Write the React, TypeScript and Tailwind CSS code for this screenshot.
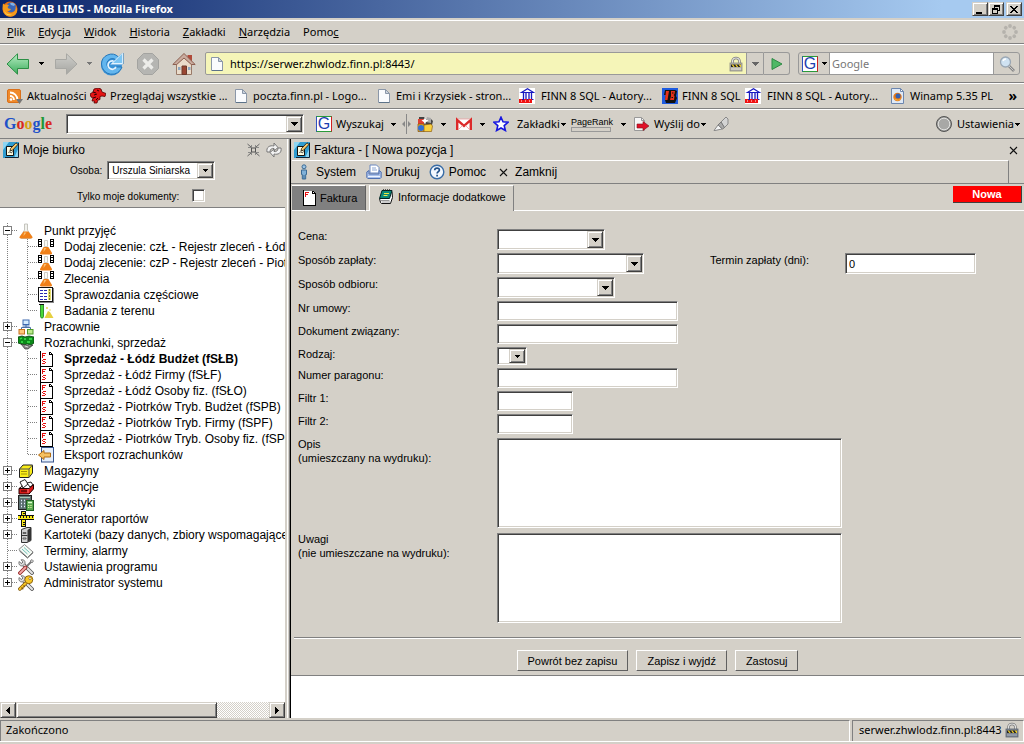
import React from "react";

const UI = "font-['Noto_Sans','Open_Sans',sans-serif] text-[11px] leading-[14px]";
const ARIAL = "font-['Liberation_Sans',Arial,sans-serif]";
const BAR = "flex items-center border-t border-t-white border-b border-b-[#808080]";
const SUNKEN =
  "border border-t-[#808080] border-l-[#808080] border-r-white border-b-white bg-white shadow-[inset_1px_1px_0_#404040,inset_-1px_-1px_0_#d4d0c8]";
const RAISED =
  "bg-[#d4d0c8] border border-t-[#d4d0c8] border-l-[#d4d0c8] border-r-[#404040] border-b-[#404040] shadow-[inset_1px_1px_0_#fff,inset_-1px_-1px_0_#808080]";

type IconProps = { children: React.ReactNode; size?: number; box?: string };

function Icon({ children, size = 16, box = "0 0 16 16" }: IconProps) {
  return (
    <svg width={size} height={size} viewBox={box} className="block flex-none" aria-hidden="true">
      {children}
    </svg>
  );
}

function Caret({ gray = false }: { gray?: boolean }) {
  return (
    <svg width="5" height="3" viewBox="0 0 5 3" className="block flex-none" shapeRendering="crispEdges" aria-hidden="true">
      <path d="M0 0h5v1H0zM1 1h3v1H1zM2 2h1v1H2z" fill={gray ? "#777" : "#000"} />
    </svg>
  );
}

function BigCaret({ gray = false }: { gray?: boolean }) {
  return (
    <svg width="7" height="4" viewBox="0 0 7 4" className="block" shapeRendering="crispEdges" aria-hidden="true">
      <path d="M0 0h7v1H0zM1 1h5v1H1zM2 2h3v1H2zM3 3h1v1H3z" fill={gray ? "#666" : "#000"} />
    </svg>
  );
}

/* ---------- browser icons ---------- */

const Firefox = () => (
  <Icon>
    <circle cx="8" cy="8" r="7.5" fill="#e66a10" />
    <circle cx="9" cy="6.5" r="5" fill="#3a66b8" />
    <path d="M8 2.500c2-1.500 4-.5 5 1l-1 1.500-3-1z" fill="#7fb2ea" />
    <path d="M1 2.500 3 4c1.500-.8 3-.6 4 .4L5.500 6l1 1.500L9 8c-1 2-3 2.400-4 1.700C6.500 12.500 11 12.600 13 9.500c.7-1.300.8-2.500.5-4 1.600 1.500 2 4 1.300 6C13 16 8 16.500 5 15 1 13 0 8 1 2.500z" fill="#f59a1c" />
    <path d="M2 9c1 3.500 4.500 5 8 4.500-3 2-7.500.5-8-4.500z" fill="#fcd34a" />
  </Icon>
);

const Page = () => (
  <Icon>
    <path d="M2.500 1.500h7l4 4v9h-11z" fill="#fafbfd" stroke="#8b97a8" />
    <path d="M9.500 1.500v4h4z" fill="#cbd3de" stroke="#8b97a8" />
    <path d="M3 14.500h10.500" stroke="#5c7288" />
  </Icon>
);

const Feed = () => (
  <Icon>
    <rect x="0.500" y="1.500" width="13" height="13" rx="1.500" fill="#f08a2c" stroke="#d9701a" />
    <path d="M3 4.500a7.500 7.500 0 0 1 7.500 7.500M3 8a4 4 0 0 1 4 4" fill="none" stroke="#fff" strokeWidth="1.800" />
    <circle cx="4" cy="11.500" r="1.300" fill="#fff" />
    <path d="M9 11h7l-3.500 5z" fill="#777" />
  </Icon>
);

const Beast = () => (
  <Icon>
    <path d="M0 6 3 4l1-3 4-1 3 1 1 3 4 1.500-1 3-3-.5-2 .5 0 3-2 .5-.5 1L7 15l-3 0 .5-2L2 13l1-3-2-1z" fill="#e41414" stroke="#500" strokeWidth=".8" />
    <path d="M3 4l3 1M4 7l3-1M3 10l3-1M6 12l2-2M7 2l2 1" fill="none" stroke="#300" />
  </Icon>
);

const Temple = () => (
  <Icon>
    <rect width="16" height="16" fill="#fff" />
    <path d="M2.500 4.500 8.500 .8l6 3.700z" fill="none" stroke="#1818c0" strokeWidth="1.200" />
    <path d="M4.500 5v6M7 5v6M10 5v6M12.500 5v6" stroke="#1818c0" strokeWidth="1.300" />
    <path d="M3 11.500h11.500" stroke="#1818c0" />
    <path d="M0 11h3v1h2v-1h3v1h1v-1h4v4H0z" fill="#f01010" />
    <path d="M2 13h1M6 13h1M10 13h1" stroke="#fff" />
  </Icon>
);

const BlueB = () => (
  <Icon>
    <rect width="16" height="16" fill="#1e5be0" />
    <path d="M3 2h10l2 1-1 5 1 2-2 5H4l-1-3 1-5H2z" fill="#111" />
    <path d="M4 3h3L5.500 12H3zM9 3h4l-.5 3-1 1 1 1-.5 4H8l1-4z" fill="#e83018" />
    <path d="M10 5h1.500M9.500 9.500H11" stroke="#111" />
  </Icon>
);

const FoxPage = () => (
  <Icon>
    <path d="M1.500 .5h9l3 3v12h-12z" fill="#dfe9f6" stroke="#6d86ae" />
    <path d="M10.500 .5v3h3z" fill="#fff" stroke="#6d86ae" />
    <circle cx="7.500" cy="9" r="4.200" fill="#e87818" />
    <circle cx="8" cy="8" r="2.500" fill="#3560b0" />
    <path d="M4 9c1 3 5 4 7 1-1 3-6 4-7-1z" fill="#fbc640" />
  </Icon>
);

const Padlock = ({ light = false }: { light?: boolean }) => (
  <Icon>
    <path d="M4.500 8V5.500a3.500 3.500 0 0 1 7 0V8" fill="none" stroke="#777" strokeWidth="2.600" />
    <path d="M4.500 8V5.500a3.500 3.500 0 0 1 7 0V8" fill="none" stroke="#e4e4e4" strokeWidth="1.200" />
    <rect x="2" y="7" width="12" height="8" fill={light ? "#b4b2aa" : "#7c8490"} stroke={light ? "#8a8a84" : "#5c6470"} strokeWidth=".8" />
    <path d="M3 8.500h10v2.500H3z" fill="#222" />
    <path d="m3.500 8.500 1.800 2.500h1.500L5 8.500zM7 8.500 8.800 11h1.500L8.500 8.500zM10.500 8.500l1.800 2.500h.7V9l-.5-.5z" fill="#f0cf28" />
    <path d="M3 13h10" stroke={light ? "#e6e4dc" : "#a8b0bc"} />
  </Icon>
);

const Arrow = ({ flip = false }: { flip?: boolean }) => (
  <Icon size={24} box="0 0 24 24">
    <defs>
      <linearGradient id={flip ? "fwd" : "back"} x1="0" y1="0" x2="0" y2="1">
        <stop offset="0" stopColor={flip ? "#cfcfcb" : "#b8eec4"} />
        <stop offset="1" stopColor={flip ? "#a5a5a1" : "#3cac5c"} />
      </linearGradient>
    </defs>
    <path
      d={flip ? "M23 12 12.500 1.800v5.700H1.500v9h11v5.700z" : "M1 12 11.500 1.800v5.700h11v9h-11v5.700z"}
      fill={flip ? "url(#fwd)" : "url(#back)"}
      stroke={flip ? "#a8a8a4" : "#2c8f45"}
    />
  </Icon>
);

const Reload = () => (
  <Icon size={24} box="0 0 24 24">
    <circle cx="11.500" cy="13" r="10.500" fill="#3a93d8" />
    <path d="M1.500 12a10 10 0 0 1 17-7L23 1v11H12l4-4a5.500 5.500 0 1 0 1 7h5A10.500 10.500 0 0 1 1.500 12z" fill="#63b6ee" stroke="#2676b8" />
    <path d="M13.500 9a4.200 4.200 0 1 0 2.500 6M12.500 11.500h9.500v-9z" fill="none" stroke="#e4f4ff" strokeWidth="1.800" />
    <path d="M13 11h9V2z" fill="#7cc5f3" />
  </Icon>
);

const Stop = () => (
  <Icon size={24} box="0 0 24 24">
    <path d="M7.500 1.500h9l6 6v9l-6 6h-9l-6-6v-9z" fill="#b5b5b2" stroke="#a3a3a0" />
    <path d="m7.500 7.500 9 9m0-9-9 9" stroke="#ecece9" strokeWidth="3.200" />
  </Icon>
);

const HomeIcon = () => (
  <Icon size={24} box="0 0 24 24">
    <path d="M15.500 3h4.500v7h-4.500z" fill="#b04a3a" />
    <path d="M4.500 12v10.500h15V12L12 5z" fill="#eadccb" stroke="#9a7a68" />
    <path d="M12 1.500 .8 12.500h3.900L12 6l7.300 6.500h3.900z" fill="#c9ab9e" stroke="#8c5f50" />
    <path d="M10 14h4.500v8.500H10z" fill="#9a4632" stroke="#6c3a2c" />
    <path d="M6 15h2.500v3H6zM16 15h2.500v3H16z" fill="#8da6c0" />
  </Icon>
);

const Throbber = () => (
  <Icon>
    {[0, 45, 90, 135, 180, 225, 270, 315].map((a) => (
      <circle key={a} cx="8" cy="2" r="1.900" fill="#b5b2ac" transform={`rotate(${a} 8 8)`} />
    ))}
  </Icon>
);

function GoogleG() {
  return (
    <span className="flex h-4 w-4 flex-none items-center justify-center border border-t-[#2a9a3a] border-r-[#d02020] border-b-[#2a9a3a] border-l-[#3050c0] bg-white font-['Liberation_Sans',sans-serif] text-[16px] leading-4 text-[#1c3eb0]">
      G
    </span>
  );
}

const Sparkle = () => (
  <Icon>
    <path d="M2 1h5l2 2h5l2 2-1 4H2z" fill="#444" />
    <path d="M1 3h6v6H1z" fill="#e04030" />
    <path d="M10 1l4 1v5l-5-1z" fill="#aaa" />
    <path d="M1 8h6v7.500H1z" fill="#f0b020" stroke="#805010" strokeWidth=".7" />
    <path d="M7 9l7-1 1.500 2-1 5.500H7z" fill="#f8d040" stroke="#906010" strokeWidth=".7" />
    <circle cx="4" cy="12" r="3" fill="#3070d8" />
    <path d="m8 1 1 2.500 2.500 1L9 6 8 8.500 6.800 6 4.500 4.500 7 3.500z" fill="#fff" />
  </Icon>
);

const Gmail = () => (
  <Icon>
    <path d="M0 3h16v11H0z" fill="#fff" />
    <path d="M1.200 14V3.800L8 9.800l6.800-6V14" fill="none" stroke="#dc2a2a" strokeWidth="2.400" />
    <path d="m2.500 13.500 4-4M13.500 13.500l-4-4M2 3h12" stroke="#e8a0a0" strokeWidth=".8" />
  </Icon>
);

const StarIcon = () => (
  <Icon>
    <path d="m8 1.200 2 4.600 5 .5-3.800 3.300 1.200 4.900L8 12l-4.400 2.500 1.200-4.900L1 6.300l5-.5z" fill="#fff" stroke="#1616e0" strokeWidth="1.600" />
  </Icon>
);

const SendIcon = () => (
  <Icon>
    <path d="M1.500 1.500h7l3 3v10h-10z" fill="#f6f6f6" stroke="#999" />
    <path d="M8.500 1.500v3h3" fill="none" stroke="#999" />
    <path d="M4 8h6V5.500l6 4.500-6 4.500V12H4z" fill="#e01028" stroke="#801018" strokeWidth=".6" />
  </Icon>
);

const Marker = () => (
  <Icon>
    <path d="M8 6 13 1l2 2v5l-4 4z" fill="#d4d4d4" stroke="#888" />
    <path d="m8 6 3.500 5.500-2 1.500L5 9z" fill="#aaa" stroke="#777" />
    <path d="M5 9l4 4-7 1.500H1z" fill="#f4f4f4" stroke="#888" />
  </Icon>
);

const Magnifier = () => (
  <Icon>
    <path d="m10 10 5 5" stroke="#888" strokeWidth="2.800" />
    <path d="m10 10 4.500 4.500" stroke="#c9c9c9" strokeWidth="1" />
    <circle cx="6.500" cy="6" r="5" fill="#cfe2f2" stroke="#9aa7b4" strokeWidth="1.300" />
    <path d="M4 5a3 3 0 0 1 3-2" stroke="#fff" fill="none" strokeWidth="1.400" />
  </Icon>
);

/* ---------- application icons ---------- */

const Desk = () => (
  <Icon>
    <rect width="16" height="16" fill="#2f9cd0" />
    <path d="M0 0h6L0 8zM16 5v11h-5z" fill="#8ed6f2" />
    <path d="M3.500 4.500h7v9h-7z" fill="#fffce0" stroke="#111" />
    <path d="M5.500 10.500c1-2 3 2 4-1" fill="none" stroke="#333" />
    <path d="m7 9 .6-2.600L13 .8l1.900 1.700-5.300 5.700z" fill="#f5c86a" stroke="#111" strokeWidth=".8" />
    <path d="M15.500 1v14.500H2" fill="none" stroke="#123" />
  </Icon>
);

const Flask = () => (
  <Icon>
    <path d="M6.500 1h3v6l4 6.500c.5 1-.2 2-1.500 2H4c-1.300 0-2-1-1.500-2l4-6.500z" fill="#f2f2ee" stroke="#b8b8b0" strokeWidth=".8" />
    <path d="M5.600 8.500h4.800l4 5.300c.4.900-.2 1.700-1.200 1.700H2.800c-1 0-1.600-.8-1.200-1.700z" fill="#f08018" />
    <path d="M6 9.500h2.500L5.500 13z" fill="#fbc070" />
  </Icon>
);

const Flasks = () => (
  <Icon>
    <path d="M6.500 1.500h3v6h-3z" fill="#fafaf6" stroke="#c0c0b8" strokeWidth=".8" />
    <path d="M5.600 8h4.800l3.500 5.800c.4.900-.2 1.700-1.200 1.700H3.300c-1 0-1.600-.8-1.200-1.700z" fill="#f08018" />
    <path d="M6 9h2.500L5.500 13z" fill="#fbc070" />
    <g shapeRendering="crispEdges">
      <path d="M0 0h4v8H0zM12 0h4v8h-4z" fill="#000" />
      <path d="M1 1h2v1H1zM1 3h2v2H1zM1 6h2v1H1zM13 1h2v1h-2zM13 3h2v2h-2zM13 6h2v1h-2z" fill="#fff" />
    </g>
  </Icon>
);

const Report = () => (
  <Icon>
    <g shapeRendering="crispEdges">
      <path d="M.500 .500h14v14H.500z" fill="#fff" stroke="#111" />
      <path d="M15.500 1v14.500H1" stroke="#888" fill="none" />
      <path d="M2 3.500h3M6 3.500h3M2 6.500h3M6 6.500h3M2 9.500h3M6 9.500h3M2 12.500h3M6 12.500h3" stroke="#2828b0" />
      <path d="M10 2h3v11h-3z" fill="#e8e070" />
      <path d="M11.500 2v11" stroke="#807820" strokeDasharray="2 1" />
    </g>
  </Icon>
);

const Field = () => (
  <Icon>
    <path d="M1 1.500h5" stroke="#111" />
    <path d="M2.500 2v11.500c0 2 3 2 3 0V2" fill="#48d838" stroke="#187818" strokeWidth=".8" />
    <path d="M6.500 15 10 8l2 1 3.500 6z" fill="#e6d040" />
    <circle cx="9" cy="5" r=".9" fill="#e6d040" /><circle cx="12" cy="7" r=".7" fill="#e6d040" />
  </Icon>
);

const Network = () => (
  <Icon>
    <path d="M8 6v3M3.500 11V8.500h9V11" fill="none" stroke="#4a6ea8" />
    <rect x="5" y="1" width="6" height="4.500" fill="#d4ebff" stroke="#3c68b0" />
    <path d="M4.500 7h7" stroke="#3c68b0" />
    <rect x="1" y="10.500" width="5.500" height="4.500" fill="#ffc878" stroke="#c87020" />
    <rect x="9.500" y="10.500" width="5.500" height="4.500" fill="#bce88c" stroke="#4c9c28" />
  </Icon>
);

const Money = () => (
  <Icon>
    <path d="M0 2l4-1 3 1 4-1 5 1v6l-3 2-4-1-3 1-6-2z" fill="#0c8a1a" stroke="#053c0a" strokeWidth=".8" />
    <path d="M2 4l2-1M6 4h2M11 4h3M3 7h2M9 7h3" stroke="#40e850" strokeWidth="1.300" />
    <path d="M3 9l4 5h3l5-4-3 1-4-1z" fill="#888" stroke="#333" strokeWidth=".7" />
    <path d="M7 11l3 1" stroke="#ddd" />
  </Icon>
);

const Invoice = ({ s = true }: { s?: boolean }) => (
  <Icon>
    <g shapeRendering="crispEdges">
      <path d="M2 1h10l3 3v11H2z" fill="#fff" />
      <path d="M2 0h1v16H2zM3 15h11v1H3zM14 4h1v12h-1zM11 1h1v3h-1zM12 1h1v1h-1zM13 2h1v1h-1zM12 3h3v1h-3z" fill="#000" />
      <path d="M4 2h4v1H4zM4 2h1v5H4zM4 4h3v1H4z" fill="#e81010" />
      {s && <path d="M5 8h3v1H5zM4 9h1v1H4zM5 10h2v1H5zM7 11h1v1H7zM4 12h3v1H4z" fill="#e81010" />}
    </g>
  </Icon>
);

const ExportIcon = () => (
  <Icon>
    <rect x="3.500" y=".5" width="12" height="14.500" fill="#e4eefb" stroke="#38548c" />
    <path d="M.500 8 6 3.500V6h6.500v4H6v2.500z" fill="#f6c060" stroke="#b06a10" />
  </Icon>
);

const Box = () => (
  <Icon>
    <path d="M1.500 6 5 2h9.500v8L11 14.500H1.500z" fill="#f8ec18" stroke="#222" />
    <path d="M1.500 6H11v8.500M11 6l3.500-4" fill="none" stroke="#555" />
    <path d="M3 8.500h6M3 11h6" stroke="#a09008" />
  </Icon>
);

const Cards = () => (
  <Icon>
    <path d="m2 3 5-2.500L10 5l-5 4z" fill="#fff" stroke="#222" />
    <path d="M9 4l4-1 2 3-3 2z" fill="#fff" stroke="#222" />
    <path d="M1 9.500h10l4.500-4V10L11 15H1z" fill="#d81818" stroke="#200" />
    <path d="M1 9.500 4.500 7M3 12h6" stroke="#200" />
    <path d="M10 10v4" stroke="#ff8080" />
  </Icon>
);

const Stats = () => (
  <Icon>
    <rect x=".5" y=".5" width="13" height="14" fill="#5c7070" stroke="#222" />
    <path d="M2 2.500h10" stroke="#a8c8b8" />
    <path d="M3 5.500h1M6 5.500h1M3 8.500h1M6 8.500h1M3 11.500h1M6 11.500h1" stroke="#e8f0ff" strokeWidth="1.300" />
    <path d="M8 4.500h1.500v1H8z" fill="#f33" />
    <rect x="8.500" y="5.500" width="7" height="10" fill="#58a850" stroke="#206020" />
    <path d="M10 7.500h4" stroke="#e0ffd0" strokeWidth="1.500" />
    <path d="M10 10.500h4M10 12.500h4" stroke="#e0f0a0" strokeDasharray="1 .7" />
  </Icon>
);

const Rulers = () => (
  <Icon>
    <g shapeRendering="crispEdges">
      <path d="M3.500 .5h4v15h-4z" fill="#f8e818" stroke="#111" />
      <path d="M0 4h16v5H0z" fill="#f8e818" />
      <path d="M0 4.500h16M0 8.500h16" stroke="#111" />
      <path d="M2.500 5v2M5.500 5v2M8.500 5v2M11.500 5v2M14.500 5v2M5 11.500h2M5 13.500h2M5 2.500h2" stroke="#111" />
    </g>
  </Icon>
);

const Cabinet = () => (
  <Icon>
    <path d="M3.500 2.500 9 .5h4v13l-4 2H3.500z" fill="#d0d0d0" stroke="#333" />
    <path d="M9.500 3 13 .8V13l-3.500 2z" fill="#333" />
    <path d="M5 5.500h3v1H5zM5 11h3v1H5z" fill="#fff" stroke="#444" strokeWidth=".8" />
    <path d="M3.500 8.500h6" stroke="#333" />
  </Icon>
);

const Note = () => (
  <Icon>
    <path d="m.8 6.500 5.700-5L15 9l-5.500 5.500z" fill="#f4faf4" stroke="#888" />
    <path d="m4 6 5.500 5M6 4.500l5.500 5" stroke="#70c0b8" />
    <path d="m1.500 8 8 7 5.800-5.500" fill="none" stroke="#666" />
  </Icon>
);

const Tools = ({ gold = false }: { gold?: boolean }) => (
  <Icon>
    <path d="m5 5 9 9" stroke="#555" strokeWidth="3.800" strokeLinecap="round" />
    <path d="m5 5 9 9" stroke="#e4e4e4" strokeWidth="2.200" strokeLinecap="round" />
    <path d="M1 2.500 3.500 4.500 5 3 3 .8C6 .2 7.500 2 7 4.500L4.500 7C2 7.300.3 5.500 1 2.500z" fill="#dcdcdc" stroke="#666" strokeWidth=".8" />
    {gold ? (
      <>
        <path d="m1.800 14 7-7" stroke="#80580c" strokeWidth="3.400" strokeLinecap="round" />
        <path d="m1.800 14 7-7" stroke="#f8c828" strokeWidth="1.900" strokeLinecap="round" />
        <circle cx="10.800" cy="4.700" r="4" fill="#f8c828" stroke="#80580c" strokeWidth=".9" />
        <circle cx="12" cy="3.600" r="1.100" fill="#fff" stroke="#80580c" strokeWidth=".6" />
        <path d="m3.500 12.500 1.800 1.800M5.500 10.500 7 12" stroke="#80580c" strokeWidth="1.300" />
      </>
    ) : (
      <>
        <path d="m8 8 5-5" stroke="#777" strokeWidth="1.800" />
        <path d="M12 2l2-1.500L15.500 2 14 4z" fill="#ccc" stroke="#666" strokeWidth=".7" />
        <path d="m2 14 5.500-5.500" stroke="#982828" strokeWidth="3.800" strokeLinecap="round" />
        <path d="m2 14 5.500-5.500" stroke="#f0a8a8" strokeWidth="1.800" strokeLinecap="round" />
      </>
    )}
  </Icon>
);

const Person = () => (
  <Icon>
    <circle cx="8" cy="2.800" r="2" fill="#9cc4e4" stroke="#3a6a94" />
    <path d="M5.500 6h5v4.500H9.700V15H6.300v-4.500h-.8z" fill="#7fb0d8" stroke="#3a6a94" />
    <path d="M8 11v4" stroke="#3a6a94" />
  </Icon>
);

const Printer = () => (
  <Icon>
    <path d="M4 1h6.500L13 3.500V9H4z" fill="#fff" stroke="#6a88c0" />
    <path d="M6 4h4M6 6h5" stroke="#8aa4d0" />
    <path d="M.800 8 3 6.500V10h10V6.500L15.200 8v5.500l-1 1H1.800l-1-1z" fill="#a9c0ea" stroke="#5070b0" />
    <path d="M2 12.500h12" stroke="#eef4ff" />
  </Icon>
);

const HelpIcon = () => (
  <Icon>
    <circle cx="8" cy="8" r="6.800" fill="#f2f8ff" stroke="#3a6da6" strokeWidth="1.400" />
    <path d="M5.700 6.300C5.700 3.300 10.400 3.400 10.400 6c0 1.600-2.300 1.700-2.300 3.500M8.100 10.800v1.800" fill="none" stroke="#1f4f88" strokeWidth="1.700" />
  </Icon>
);

const Cross = () => (
  <Icon size={9} box="0 0 9 9">
    <path d="m1 1 7 7m0-7L1 8" stroke="#111" strokeWidth="1.100" />
  </Icon>
);

const Book = () => (
  <Icon>
    <path d="m1.500 9.500 1 4 1 1h9l2-6-.5-6" fill="#fff" stroke="#111" />
    <path d="M3 11.500h8.500M3.500 13h8.500" stroke="#999" />
    <path d="M4 1.500h10l-2.500 8H1.500z" fill="#0a8878" stroke="#022" />
    <path d="M6 4.500h5M5.500 6.500h4" stroke="#f0e840" />
    <path d="M5.500 0v2M7.500 0v2M9.500 0v2M11.500 0v2" stroke="#222" strokeWidth=".7" />
  </Icon>
);

const Collapse = () => (
  <Icon>
    <rect x="5.500" y="6" width="4" height="4" fill="none" stroke="#555" />
    <path d="M1.500 2 5 5M13.500 2 10 5M1.500 14 5 11M13.500 14 10 11" stroke="#666" />
    <path d="M2 5.500h3.500V3M13 5.500H9.500V3M2 10.500h3.500V13M13 10.500H9.500V13" fill="none" stroke="#777" strokeWidth=".8" />
  </Icon>
);

const Refresh = () => (
  <Icon>
    <path d="M1 10C0 5 4 3 8 4V1l4 4.500L8 9V6.500C6 6 4 7 4 10z" fill="#f2f2f2" stroke="#777" />
    <path d="M15 6c1 5-3 7-7 6v3l-4-4.500L8 7v2.500c2 .500 4-.5 4-3.500z" fill="#f2f2f2" stroke="#777" />
  </Icon>
);

/* ---------- browser chrome ---------- */

function WindowButton({ label, children }: { label: string; children: React.ReactNode }) {
  return (
    <button aria-label={label} className={`flex h-[14px] w-4 items-center justify-center ${RAISED}`}>
      <svg width="10" height="9" viewBox="0 0 10 9" shapeRendering="crispEdges" aria-hidden="true">
        {children}
      </svg>
    </button>
  );
}

function TitleBar() {
  return (
    <header className="flex h-[18px] items-center bg-[linear-gradient(90deg,#0a246a,#a6caf0_92%)] pr-[2px] pl-[2px]">
      <Firefox />
      <h1 className="ml-[2px] flex-1 font-['Noto_Sans',sans-serif] text-[11px] leading-[18px] font-bold text-white">
        CELAB LIMS - Mozilla Firefox
      </h1>
      <WindowButton label="Minimalizuj">
        <path d="M1 7h6v2H1z" />
      </WindowButton>
      <WindowButton label="Przywróć">
        <path d="M3 0h6v6H7V5h1V2H4v1H3zM1 3h6v6H1zM2 5v3h4V5z" fillRule="evenodd" />
      </WindowButton>
      <span className="w-[2px]" />
      <WindowButton label="Zamknij okno">
        <path d="M1 1h2v1h1v1h2V2h1V1h2v1H8v1H7v1H6v1h1v1h1v1h1v1H7V7H6V6H4v1H3v1H1V7h1V6h1V5h1V4H3V3H2V2H1z" />
      </WindowButton>
    </header>
  );
}

const MENU: [string, string, string][] = [
  ["", "P", "lik"],
  ["", "E", "dycja"],
  ["", "W", "idok"],
  ["", "H", "istoria"],
  ["", "Z", "akładki"],
  ["", "N", "arzędzia"],
  ["Pomo", "c", ""],
];

function MenuBar() {
  return (
    <nav className={`${BAR} mt-[2px] h-6 gap-[13px] pr-[6px] pl-[7px]`}>
      {MENU.map(([a, u, b]) => (
        <button key={u}>
          {a}
          <u>{u}</u>
          {b}
        </button>
      ))}
      <span className="ml-auto">
        <Throbber />
      </span>
    </nav>
  );
}

function NavBar() {
  return (
    <div className={`${BAR} h-[39px] pr-1 pl-[6px]`}>
      <button aria-label="Wstecz" className="flex w-12 items-center gap-[9px]">
        <Arrow />
        <Caret />
      </button>
      <button aria-label="Dalej" className="flex w-[46px] items-center gap-[9px]">
        <Arrow flip />
        <Caret gray />
      </button>
      <button aria-label="Odśwież" className="w-9"><Reload /></button>
      <button aria-label="Zatrzymaj" className="w-9"><Stop /></button>
      <button aria-label="Start" className="w-[33px]"><HomeIcon /></button>
      <div className="flex h-[23px] flex-1 items-center rounded-l-[2px] border border-[#999] bg-[#f5f5b8] pl-[3px]">
        <Page />
        <input
          aria-label="Adres"
          defaultValue="https://serwer.zhwlodz.finn.pl:8443/"
          className="ml-[5px] h-5 min-w-0 flex-1 bg-transparent outline-none"
        />
        <Padlock light />
        <button aria-label="Historia adresów" className="ml-[2px] flex h-[21px] w-[17px] items-center justify-center border-l border-[#999] bg-[#d4d0c8]">
          <BigCaret gray />
        </button>
      </div>
      <button aria-label="Przejdź" className="flex h-[23px] w-[26px] items-center justify-center rounded-r-[3px] border border-l-0 border-[#999]">
        <Icon size={14} box="0 0 14 14">
          <path d="M2 1.500v11l10-5.500z" fill="#4fb866" stroke="#2c8a44" />
        </Icon>
      </button>
      <div className="ml-2 flex h-[23px] w-[222px] items-center rounded-[3px] border border-[#999]">
        <button aria-label="Wyszukiwarka" className="flex w-[30px] items-center gap-1 pl-[3px]">
          <GoogleG />
          <Caret />
        </button>
        <input aria-label="Szukaj" placeholder="Google" className="h-[21px] min-w-0 flex-1 border-x border-[#999] bg-white px-[2px] outline-none placeholder:text-[#777]" />
        <button aria-label="Szukaj w sieci" className="flex w-[25px] justify-center">
          <Magnifier />
        </button>
      </div>
    </div>
  );
}

function Bookmark({ icon, className, children }: { icon: React.ReactNode; className: string; children: string }) {
  return (
    <a href="#" className={`flex flex-none items-center overflow-hidden whitespace-nowrap ${className}`}>
      {icon}
      {children}
    </a>
  );
}

function BookmarksBar() {
  return (
    <nav className={`${BAR} h-[26px] pl-[7px]`}>
      <Bookmark icon={<Feed />} className="w-[83px] gap-1">Aktualności</Bookmark>
      <Bookmark icon={<Beast />} className="w-[143px] gap-1">Przeglądaj wszystkie ...</Bookmark>
      <Bookmark icon={<Page />} className="w-[143px] gap-1">poczta.finn.pl - Logo...</Bookmark>
      <Bookmark icon={<Page />} className="w-[143px] gap-1">Emi i Krzysiek - stron...</Bookmark>
      <Bookmark icon={<Temple />} className="w-[143px] gap-[6px]">FINN 8 SQL - Autory...</Bookmark>
      <Bookmark icon={<BlueB />} className="w-[83px] gap-1">FINN 8 SQL</Bookmark>
      <Bookmark icon={<Temple />} className="w-[145px] gap-[6px]">FINN 8 SQL - Autory...</Bookmark>
      <Bookmark icon={<FoxPage />} className="w-[110px] gap-1">Winamp 5.35 PL</Bookmark>
      <button aria-label="Więcej zakładek" className="ml-auto pr-[7px] text-[14px] font-bold">»</button>
    </nav>
  );
}

const LOGO: [string, string][] = [
  ["G", "text-[#2050c8]"],
  ["o", "text-[#d82820]"],
  ["o", "text-[#d8a010]"],
  ["g", "text-[#2050c8]"],
  ["l", "text-[#209838]"],
  ["e", "text-[#d82820]"],
];

function GoogleBar() {
  return (
    <div className={`${BAR} h-[30px] pr-1 pl-1 whitespace-nowrap`}>
      <a href="#" className="w-[62px] flex-none font-['Liberation_Serif',serif] text-[16px] leading-5 font-bold">
        {LOGO.map(([ch, color], i) => (
          <span key={i} className={color}>{ch}</span>
        ))}
      </a>
      <div className={`flex h-5 w-[238px] flex-none p-px ${SUNKEN}`}>
        <input aria-label="Szukaj w Google" className="min-w-0 flex-1 outline-none" />
        <button aria-label="Ostatnie zapytania" className={`flex w-4 items-center justify-center ${RAISED}`}>
          <BigCaret />
        </button>
      </div>
      <button className="ml-3 flex w-[86px] flex-none items-center">
        <GoogleG />
        <span className="ml-1 flex-1 text-left">Wyszukaj</span>
        <span className="mr-[6px]"><Caret /></span>
      </button>
      <span className="flex w-[15px] flex-none items-center">
        <svg width="9" height="20" viewBox="0 0 9 20" aria-hidden="true">
          <path d="M4.500 0v20" stroke="#888" />
          <path d="M0 10l3-3v6zM9 10 6 7v6z" fill="#888" />
        </svg>
      </span>
      <button aria-label="Dodatki" className="flex w-[39px] flex-none items-center gap-2"><Sparkle /><Caret /></button>
      <button aria-label="Gmail" className="flex w-[37px] flex-none items-center gap-2"><Gmail /><Caret /></button>
      <button className="flex w-[78px] flex-none items-center">
        <StarIcon />
        <span className="mr-px ml-2">Zakładki</span>
        <Caret />
      </button>
      <button className="flex w-[62px] flex-none items-center gap-2">
        <span className="flex flex-col items-start">
          <span className="font-['Liberation_Sans',sans-serif] text-[9px] leading-[10px]">PageRank</span>
          <span className="h-[5px] w-10 border border-[#999]" />
        </span>
        <Caret />
      </button>
      <button className="flex w-20 flex-none items-center">
        <SendIcon />
        <span className="mr-px ml-[5px]">Wyślij do</span>
        <Caret />
      </button>
      <button aria-label="Zakreślacz"><Marker /></button>
      <button className="ml-auto flex items-center">
        <Icon size={18} box="0 0 18 18">
          <circle cx="9" cy="9" r="7.500" fill="#9a9a98" stroke="#555" />
          <circle cx="9" cy="9" r="5.800" fill="#a8a8a6" stroke="#e2e2e0" />
        </Icon>
        <span className="mr-px ml-1">Ustawienia</span>
        <Caret />
      </button>
    </div>
  );
}

/* ---------- left frame ---------- */

type Node = { label: string; icon: React.ReactNode; child?: boolean; state?: "+" | "-"; bold?: boolean; last?: boolean };

const TREE: Node[] = [
  { label: "Punkt przyjęć", icon: <Flask />, state: "-" },
  { label: "Dodaj zlecenie: czŁ - Rejestr zleceń - Łódź", icon: <Flasks />, child: true },
  { label: "Dodaj zlecenie: czP - Rejestr zleceń - Piotrków", icon: <Flasks />, child: true },
  { label: "Zlecenia", icon: <Flasks />, child: true },
  { label: "Sprawozdania częściowe", icon: <Report />, child: true },
  { label: "Badania z terenu", icon: <Field />, child: true, last: true },
  { label: "Pracownie", icon: <Network />, state: "+" },
  { label: "Rozrachunki, sprzedaż", icon: <Money />, state: "-" },
  { label: "Sprzedaż - Łódź Budżet (fSŁB)", icon: <Invoice />, child: true, bold: true },
  { label: "Sprzedaż - Łódź Firmy (fSŁF)", icon: <Invoice />, child: true },
  { label: "Sprzedaż - Łódź Osoby fiz. (fSŁO)", icon: <Invoice />, child: true },
  { label: "Sprzedaż - Piotrków Tryb. Budżet (fSPB)", icon: <Invoice />, child: true },
  { label: "Sprzedaż - Piotrków Tryb. Firmy (fSPF)", icon: <Invoice />, child: true },
  { label: "Sprzedaż - Piotrków Tryb. Osoby fiz. (fSPO)", icon: <Invoice />, child: true },
  { label: "Eksport rozrachunków", icon: <ExportIcon />, child: true, last: true },
  { label: "Magazyny", icon: <Box />, state: "+" },
  { label: "Ewidencje", icon: <Cards />, state: "+" },
  { label: "Statystyki", icon: <Stats />, state: "+" },
  { label: "Generator raportów", icon: <Rulers />, state: "+" },
  { label: "Kartoteki (bazy danych, zbiory wspomagające)", icon: <Cabinet />, state: "+" },
  { label: "Terminy, alarmy", icon: <Note /> },
  { label: "Ustawienia programu", icon: <Tools />, state: "+" },
  { label: "Administrator systemu", icon: <Tools gold />, state: "+", last: true },
];

function Branch({ node }: { node: Node }) {
  const width = node.child ? 38 : 18;
  const dots = { stroke: "#808080", strokeDasharray: "1 1" };
  return (
    <svg width={width} height="16" viewBox={`0 0 ${width} 16`} className="block flex-none" shapeRendering="crispEdges" aria-hidden="true">
      <path d={!node.child && node.last ? "M7.500 0v8" : "M7.500 0v16"} {...dots} />
      {node.child ? (
        <path d={node.last ? "M27.500 0v8M28 7.500h9" : "M27.500 0v16M28 7.500h9"} {...dots} />
      ) : (
        <path d="M8 7.500h9" {...dots} />
      )}
      {node.state && (
        <>
          <rect x="3.500" y="3.500" width="8" height="8" fill="#fff" stroke="#808080" />
          <path d={node.state === "+" ? "M5 7.500h5M7.500 5v5" : "M5 7.500h5"} stroke="#000" />
        </>
      )}
    </svg>
  );
}

function Tree() {
  return (
    <ul className="flex-1 overflow-hidden bg-white pt-[15px] text-[12px] leading-4">
      {TREE.map((n) => (
        <li key={n.label}>
          <a href="#" className={`flex h-4 items-center whitespace-nowrap ${n.bold ? "font-bold" : ""}`}>
            <Branch node={n} />
            {n.icon}
            <span className="ml-[10px]">{n.label}</span>
          </a>
        </li>
      ))}
    </ul>
  );
}

function HScroll() {
  return (
    <div className="flex h-4 bg-[repeating-conic-gradient(#fff_0_25%,#d4d0c8_0_50%)] bg-[length:2px_2px]">
      <button aria-label="Przewiń w lewo" className={`flex w-4 items-center justify-center ${RAISED}`}>
        <svg width="4" height="7" shapeRendering="crispEdges" aria-hidden="true"><path d="M3 0h1v7H3zM2 1h1v5H2zM1 2h1v3H1zM0 3h1v1H0z" /></svg>
      </button>
      <div className={`w-[201px] ${RAISED}`} />
      <button aria-label="Przewiń w prawo" className={`ml-auto flex w-4 items-center justify-center ${RAISED}`}>
        <svg width="4" height="7" shapeRendering="crispEdges" aria-hidden="true"><path d="M0 0h1v7H0zM1 1h1v5H1zM2 2h1v3H2zM3 3h1v1H3z" /></svg>
      </button>
    </div>
  );
}

type SelectProps = { id: string; className: string; small?: boolean; options?: string[] };

function Select({ id, className, small = false, options = [""] }: SelectProps) {
  return (
    <div className={`relative ${className} ${SUNKEN}`}>
      <select id={id} className="h-full w-full appearance-none bg-transparent pl-1 outline-none">
        {options.map((o) => (
          <option key={o}>{o}</option>
        ))}
      </select>
      <span className={`pointer-events-none absolute inset-y-px right-px flex w-4 items-center justify-center ${RAISED}`}>
        {small ? <Caret /> : <BigCaret />}
      </span>
    </div>
  );
}

function Sidebar() {
  return (
    <aside className="flex w-[285px] flex-none flex-col">
      <div className="h-[69px] border-b border-[#808080]">
        <div className="flex h-[22px] items-center pr-[3px] pl-[3px]">
          <Desk />
          <h2 className="ml-1 flex-1 text-[12px] leading-4">Moje biurko</h2>
          <button aria-label="Zwiń"><Collapse /></button>
          <button aria-label="Odśwież drzewo" className="ml-1"><Refresh /></button>
        </div>
        <div className="flex items-center gap-[5px] pl-[70px] text-[10px] leading-3">
          <label htmlFor="osoba">Osoba:</label>
          <Select id="osoba" small className="h-[19px] w-[108px]" options={["Urszula Siniarska"]} />
        </div>
        <div className="mt-[7px] flex items-center gap-2 pl-[77px] text-[10px] leading-3">
          <label htmlFor="moje" className="w-[107px] pt-1">Tylko moje dokumenty:</label>
          <input id="moje" type="checkbox" className={`h-[13px] w-[13px] appearance-none ${SUNKEN}`} />
        </div>
      </div>
      <Tree />
      <HScroll />
    </aside>
  );
}

/* ---------- right frame ---------- */

const LABEL = "leading-[14px] text-[11px]";

function FieldRow({ id, label, children, note }: { id: string; label: string; note?: string; children: React.ReactNode }) {
  return (
    <>
      <label htmlFor={id} className={LABEL}>
        {label}
        {note && <><br />{note}</>}
      </label>
      {children}
    </>
  );
}

function FormButton({ children }: { children: string }) {
  return (
    <button className="h-[21px] border border-t-white border-r-[#606060] border-b-[#606060] border-l-white px-[10px] text-[11px] leading-[14px]">
      {children}
    </button>
  );
}

function Main() {
  return (
    <main className="flex min-w-0 flex-1 flex-col bg-white">
      <div className="border-b border-[#808080] bg-[#d4d0c8]">
        <div className="flex h-[21px] items-center pr-[6px] pl-[3px]">
          <Desk />
          <h2 className="ml-1 flex-1 text-[12px] leading-4">Faktura - [ Nowa pozycja ]</h2>
          <button aria-label="Zamknij kartę" className="pt-px"><Cross /></button>
        </div>
        <div className="border-b border-[#808080] pr-[15px] pl-px">
          <div className="flex h-[23px] items-center border-t border-r border-t-white border-r-[#808080] pl-1 text-[12px] leading-4">
            <button className="flex items-center gap-1"><Person />System</button>
            <button className="ml-[10px] flex items-center gap-[3px]"><Printer />Drukuj</button>
            <button className="ml-[9px] flex items-center gap-1"><HelpIcon />Pomoc</button>
            <button className="ml-[13px] flex items-center gap-[7px]"><Cross />Zamknij</button>
          </div>
        </div>
        <div className="flex h-[27px] items-stretch pt-px pl-px">
          <button className="flex w-[74px] items-center gap-[3px] border-t border-r border-b border-t-white border-r-[#606060] border-b-white bg-[#808080] pl-[9px] text-[11px]">
            <Invoice s={false} />Faktura
          </button>
          <span className="w-[3px] border-b border-white" />
          <button className="flex w-[145px] items-center gap-1 border-t border-r border-l border-t-white border-r-[#808080] border-l-white pb-[3px] pl-2 text-[11px]">
            <Book />Informacje dodatkowe
          </button>
          <div className="flex flex-1 justify-end border-b border-white pt-px pr-[2px]">
            <strong className="h-[17px] w-[69px] border-r border-b border-[#404040] bg-[#f00] text-center text-[11px] leading-4 text-white">Nowa</strong>
          </div>
        </div>
        <form onSubmit={(e) => e.preventDefault()}>
          <div className="grid grid-cols-[199px_213px_135px_1fr] items-start gap-y-[3px] pt-[18px] pl-[7px] text-[11px]">
            <FieldRow id="cena" label="Cena:"><Select id="cena" className="col-span-3 h-[21px] w-[108px]" /></FieldRow>
            <FieldRow id="zaplata" label="Sposób zapłaty:"><Select id="zaplata" className="h-[21px] w-[147px]" /></FieldRow>
            <FieldRow id="termin" label="Termin zapłaty (dni):">
              <input id="termin" defaultValue="0" className={`h-[21px] w-[131px] px-[3px] outline-none ${SUNKEN}`} />
            </FieldRow>
            <FieldRow id="odbior" label="Sposób odbioru:"><Select id="odbior" className="col-span-3 h-[21px] w-[118px]" /></FieldRow>
            <FieldRow id="umowa" label="Nr umowy:"><input id="umowa" className={`col-span-3 h-5 w-[181px] ${SUNKEN}`} /></FieldRow>
            <FieldRow id="dokument" label="Dokument związany:"><input id="dokument" className={`col-span-3 h-5 w-[181px] ${SUNKEN}`} /></FieldRow>
            <FieldRow id="rodzaj" label="Rodzaj:"><Select id="rodzaj" small className="col-span-3 h-[18px] w-[30px]" /></FieldRow>
            <FieldRow id="paragon" label="Numer paragonu:"><input id="paragon" className={`col-span-3 h-5 w-[181px] ${SUNKEN}`} /></FieldRow>
            <FieldRow id="filtr1" label="Filtr 1:"><input id="filtr1" className={`col-span-3 h-5 w-[76px] ${SUNKEN}`} /></FieldRow>
            <FieldRow id="filtr2" label="Filtr 2:"><input id="filtr2" className={`col-span-3 h-5 w-[76px] ${SUNKEN}`} /></FieldRow>
            <FieldRow id="opis" label="Opis" note="(umieszczany na wydruku):">
              <textarea id="opis" className={`col-span-3 my-px block h-[90px] w-[345px] resize-none ${SUNKEN}`} />
            </FieldRow>
            <FieldRow id="uwagi" label="Uwagi" note="(nie umieszczane na wydruku):">
              <textarea id="uwagi" className={`col-span-3 my-px block h-[90px] w-[345px] resize-none ${SUNKEN}`} />
            </FieldRow>
          </div>
          <hr className="mx-[3px] mt-[13px] h-[2px] border-t border-b border-t-[#808080] border-b-white" />
          <div className="flex justify-center gap-2 pt-[11px] pb-1">
            <FormButton>Powrót bez zapisu</FormButton>
            <FormButton>Zapisz i wyjdź</FormButton>
            <FormButton>Zastosuj</FormButton>
          </div>
        </form>
      </div>
    </main>
  );
}

function StatusBar() {
  return (
    <footer className="border-b-2 border-[#d4d0c8] pt-[2px]">
      <div className="flex h-[22px] gap-[2px] border-b border-white">
        <div className="flex flex-1 items-center border-t border-r border-l border-t-[#808080] border-r-white border-l-[#808080] pb-[2px] pl-[5px]">Zakończono</div>
        <div className="flex w-[172px] items-center justify-between border-t border-r border-l border-t-[#808080] border-r-white border-l-[#808080] pr-[3px] pb-[2px] pl-[6px]">
          serwer.zhwlodz.finn.pl:8443
          <Padlock />
        </div>
      </div>
    </footer>
  );
}

export default function App() {
  return (
    <div className={`flex min-h-screen flex-col bg-[#d4d0c8] text-black ${UI}`}>
      <TitleBar />
      <MenuBar />
      <NavBar />
      <BookmarksBar />
      <GoogleBar />
      <div className={`flex flex-1 items-stretch ${ARIAL}`}>
        <Sidebar />
        <div className="w-[6px] flex-none border-r border-l-2 border-r-black border-l-[#d4d0c8] bg-[#d4d0c8] shadow-[inset_1px_0_0_#fff,inset_-1px_0_0_#808080]" />
        <Main />
      </div>
      <StatusBar />
    </div>
  );
}
